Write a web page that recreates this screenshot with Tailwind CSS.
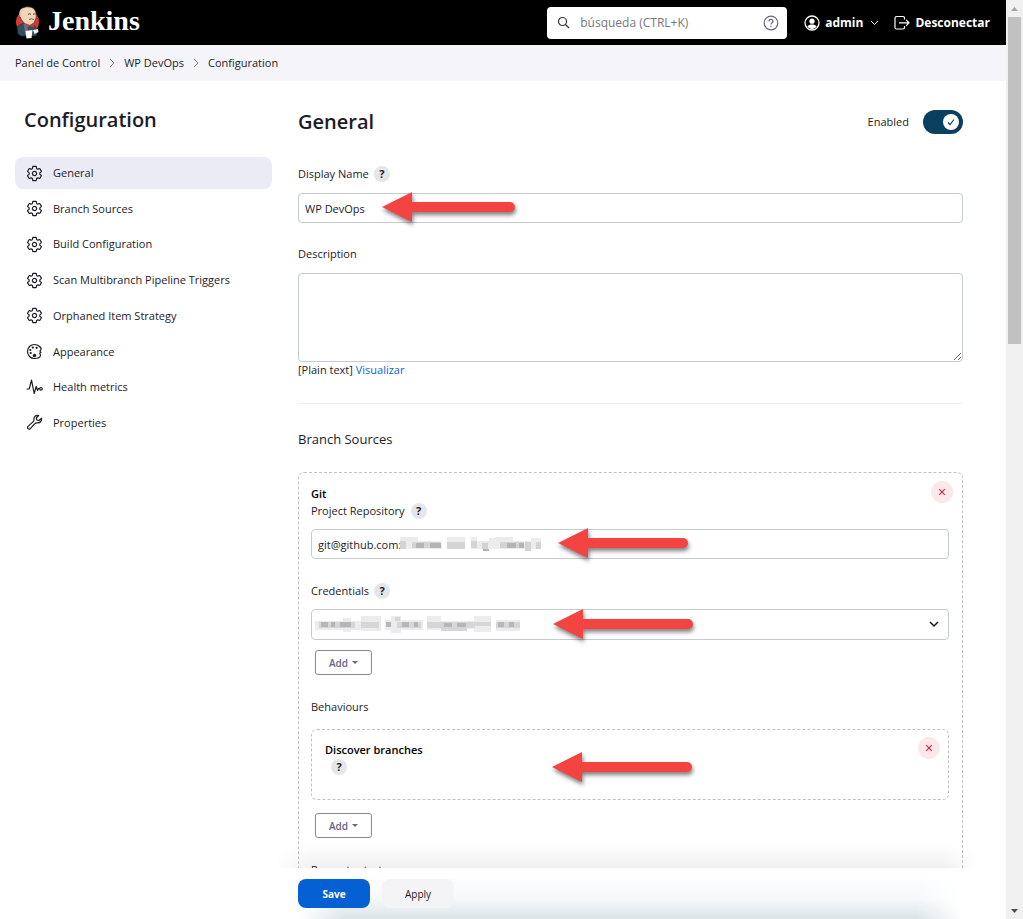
<!DOCTYPE html>
<html lang="es">
<head>
<meta charset="utf-8">
<title>WP DevOps Config [Jenkins]</title>
<script src="https://cdn.jsdelivr.net/npm/@tailwindcss/browser@4"></script>
</head>
<body class="flex h-screen overflow-hidden bg-white font-['Open_Sans','Noto_Sans',sans-serif] text-[11px] leading-4 text-[#1c1c28]">
<svg class="hidden" aria-hidden="true">
  <symbol id="gear" viewBox="0 0 512 512"><path d="M262.29 192.31a64 64 0 1 0 57.4 57.4 64.13 64.13 0 0 0-57.4-57.4zM416.39 256a154.34 154.34 0 0 1-1.53 20.79l45.21 35.46a10.81 10.81 0 0 1 2.45 13.75l-42.77 74a10.81 10.81 0 0 1-13.14 4.59l-44.9-18.08a16.11 16.11 0 0 0-15.17 1.75A164.48 164.48 0 0 1 325 400.8a15.94 15.94 0 0 0-8.82 12.14l-6.73 47.89a11.08 11.08 0 0 1-10.68 9.17h-85.54a11.11 11.11 0 0 1-10.69-8.87l-6.72-47.82a16.07 16.07 0 0 0-9-12.22 155.3 155.3 0 0 1-21.46-12.57 16 16 0 0 0-15.11-1.71l-44.89 18.07a10.81 10.81 0 0 1-13.14-4.58l-42.77-74a10.8 10.8 0 0 1 2.45-13.75l38.21-30a16.05 16.05 0 0 0 6-14.08c-.36-4.17-.58-8.33-.58-12.5s.21-8.27.58-12.35a16 16 0 0 0-6.07-13.94l-38.19-30A10.81 10.81 0 0 1 49.48 186l42.77-74a10.81 10.81 0 0 1 13.14-4.59l44.9 18.08a16.11 16.11 0 0 0 15.17-1.75A164.48 164.48 0 0 1 187 111.2a15.94 15.94 0 0 0 8.82-12.14l6.73-47.89A11.08 11.08 0 0 1 213.23 42h85.54a11.11 11.11 0 0 1 10.69 8.87l6.72 47.82a16.07 16.07 0 0 0 9 12.22 155.3 155.3 0 0 1 21.46 12.57 16 16 0 0 0 15.11 1.71l44.89-18.07a10.81 10.81 0 0 1 13.14 4.58l42.77 74a10.8 10.8 0 0 1-2.45 13.75l-38.21 30a16.05 16.05 0 0 0-6.05 14.08c.33 4.14.55 8.3.55 12.47z" fill="none" stroke="currentColor" stroke-linejoin="round" stroke-width="36"/></symbol>
  <symbol id="cross" viewBox="0 0 10 10"><path d="M1.5 1.5l7 7M8.5 1.5l-7 7" stroke="currentColor" stroke-width="1.3" fill="none"/></symbol>
</svg>

<div class="flex min-w-0 flex-1 flex-col">
  <header class="flex h-[45px] shrink-0 items-center bg-black pr-4 pl-[15px] text-white">
    <a href="#" class="flex items-center gap-2">
      <svg class="h-[33px] w-[25px]" viewBox="0 0 25 33" aria-hidden="true">
        <circle cx="12.5" cy="16" r="11.5" fill="#d33833"/>
        <path d="M5 10C4 3 10 0 14 1c6 0 8 6 7 11l-2 5-5 3-5-3-3-4z" fill="#f0d6b7" stroke="#4a352c" stroke-width=".7"/>
        <path d="M5 11C3 5 6 2 9 2L7 6l0 5z" fill="#d8d2c8"/>
        <path d="M13 8.300q1.500-1 3 0M18 8.300q1.500-1 2.500 0" fill="none" stroke="#37302c" stroke-width=".9"/>
        <path d="M14 13.500q2-1.500 5 0" fill="none" stroke="#6d4c36" stroke-width=".9"/>
        <path d="M2 21l6-4 5 4 5-3 5 7-2 5H6l-3-2z" fill="#335061" stroke="#132634" stroke-width=".6"/>
        <path d="M8.500 17.500l3 1 2 7-3 3z" fill="#5d7688"/>
        <path d="M11 17.500l4 1.500 4-2v4.500l-4-1.500-3 2z" fill="#d33833"/>
        <path d="M10.500 25l7-1-1 8-5 .5z" fill="#fff"/><path d="M18 24l5-1 .5 3-4 2z" fill="#f4eee3"/>
      </svg>
      <span class="-mt-1 font-['Liberation_Serif',serif] text-[28px] leading-8 font-bold">Jenkins</span>
    </a>
    <form class="ml-auto flex h-8 w-60 items-center rounded bg-white px-[10px] text-[#5c5c66]">
      <svg class="size-[13px] shrink-0" viewBox="0 0 13 13" fill="none" stroke="#33333c" stroke-width="1.200" aria-hidden="true"><circle cx="5.500" cy="5.500" r="4"/><path d="M8.500 8.500l3.500 3.500"/></svg>
      <input type="search" aria-label="búsqueda" placeholder="búsqueda (CTRL+K)" class="ml-[10px] min-w-0 flex-1 text-xs outline-none placeholder:text-[#77777f]">
      <button type="button" aria-label="Ayuda" class="-mr-[2px] shrink-0"><svg class="size-4" viewBox="0 0 16 16" fill="none" stroke="#666680" stroke-width="1.200"><circle cx="8" cy="8" r="6.800"/><path d="M6 6.400c0-2.600 4-2.600 4 0 0 1.400-2 1.500-2 3M8 10.800v1.200"/></svg></button>
    </form>
    <a href="#" class="ml-[17px] flex items-center gap-[5px] text-xs font-bold">
      <svg class="size-4" viewBox="0 0 16 16" aria-hidden="true"><circle cx="8" cy="8" r="7" fill="none" stroke="#fff" stroke-width="1.300"/><circle cx="8" cy="6.200" r="2.600" fill="#fff"/><path d="M3.500 11.500c1.500-2.600 7.500-2.600 9 0-2 3.300-7 3.300-9 0z" fill="#fff"/></svg>
      admin
    </a>
    <button type="button" aria-label="Menú de usuario" class="ml-[7px]"><svg class="h-2 w-[9px]" viewBox="0 0 9 8" fill="none" stroke="#fff" stroke-width="1"><path d="M1 2l3.500 3.500L8 2"/></svg></button>
    <a href="#" class="ml-[15px] flex items-center gap-[5px] text-xs font-bold">
      <svg class="size-4" viewBox="0 0 16 16" fill="none" stroke="#fff" stroke-width="1.200" aria-hidden="true"><path d="M10.500 4.500V3q0-1.500-1.500-1.500H2.500Q1 1.500 1 3v9.500Q1 14 2.500 14H9q1.500 0 1.500-1.500V11M5 7.800h10M12 4.800l3 3-3 3"/></svg>
      Desconectar
    </a>
  </header>

  <nav aria-label="Ruta" class="flex h-9 shrink-0 items-center gap-[9px] bg-[#f5f5f9] px-[15px]">
    <a href="#">Panel de Control</a>
    <svg class="h-[10px] w-[6px]" viewBox="0 0 6 10" fill="none" stroke="#85858f" aria-hidden="true"><path d="M1 1l4 4-4 4"/></svg>
    <a href="#">WP DevOps</a>
    <svg class="h-[10px] w-[6px]" viewBox="0 0 6 10" fill="none" stroke="#85858f" aria-hidden="true"><path d="M1 1l4 4-4 4"/></svg>
    <a href="#">Configuration</a>
  </nav>

  <div class="flex min-h-0 flex-1 gap-[26px] overflow-hidden pr-[43px] pl-[15px]">
    <aside class="w-[257px] shrink-0 pt-[25px]">
      <h1 class="px-[9px] text-[20px] leading-7 font-semibold">Configuration</h1>
      <nav aria-label="Secciones" class="mt-[23px] grid h-[282px] content-between">
        <a href="#general" class="flex h-8 items-center gap-[10px] rounded-lg bg-[#ebebf5] px-[11px]"><svg class="size-[17px]"><use href="#gear"/></svg>General</a>
        <a href="#sources" class="flex h-8 items-center gap-[10px] rounded-lg px-[11px]"><svg class="size-[17px]"><use href="#gear"/></svg>Branch Sources</a>
        <a href="#build" class="flex h-8 items-center gap-[10px] rounded-lg px-[11px]"><svg class="size-[17px]"><use href="#gear"/></svg>Build Configuration</a>
        <a href="#triggers" class="flex h-8 items-center gap-[10px] rounded-lg px-[11px]"><svg class="size-[17px]"><use href="#gear"/></svg>Scan Multibranch Pipeline Triggers</a>
        <a href="#orphaned" class="flex h-8 items-center gap-[10px] rounded-lg px-[11px]"><svg class="size-[17px]"><use href="#gear"/></svg>Orphaned Item Strategy</a>
        <a href="#appearance" class="flex h-8 items-center gap-[10px] rounded-lg px-[11px]"><svg class="size-[17px]" viewBox="0 0 17 17" fill="none" stroke="currentColor" stroke-width="1.200"><path d="M14.800 9.300c-1.300-.8-.7-1.900.1-2.600C16 5 12.500 1.500 8.500 1.500c-4 0-7 3-7 7s3 7 6.800 7c3.200 0 6-1.300 6.200-3 .1-1.200-1.200-1.500-.6-2.500z"/><g fill="currentColor" stroke="none"><circle cx="8.500" cy="12.500" r="1.700"/><circle cx="4.700" cy="10" r="1.100"/><circle cx="4.300" cy="7" r="1.100"/><circle cx="6.800" cy="4.600" r="1.100"/><circle cx="10.600" cy="4.800" r="1.100"/></g></svg>Appearance</a>
        <a href="#health" class="flex h-8 items-center gap-[10px] rounded-lg px-[11px]"><svg class="size-[17px]" viewBox="0 0 17 17" fill="none" stroke="currentColor" stroke-width="1.200" stroke-linejoin="round" stroke-linecap="round"><path d="M1 10h2.200L5.500 1.200 8.200 14.500l2-7 1.400 4L12.500 9.500h1"/><circle cx="15" cy="9.800" r="1.300"/></svg>Health metrics</a>
        <a href="#properties" class="flex h-8 items-center gap-[10px] rounded-lg px-[11px]"><svg class="size-[17px]" viewBox="0 0 17 17" fill="none" stroke="currentColor" stroke-width="1.200" stroke-linejoin="round"><path d="M15.500 4.200l-2.600 2.300-2.100-.5-.5-2 2.400-2.500c-2.300-.6-5.200.7-4.800 4.200.1 1-.2 1.600-.9 2.200l-5 4.500c-1.500 1.500.8 3.800 2.300 2.300l4.500-5c.6-.7 1.300-1 2.200-.9 3.500.4 5.200-2.300 4.500-4.600z"/><path d="M3.500 13.500h.2"/></svg>Properties</a>
      </nav>
    </aside>

    <main class="min-w-0 flex-1 pt-[27px]">
      <section id="general">
        <div class="flex h-7 items-center">
          <h2 class="text-[20px] leading-7 font-semibold">General</h2>
          <label for="enabled" class="ml-auto flex items-center gap-[14px]">Enabled
            <span class="relative flex h-6 w-10">
              <input id="enabled" type="checkbox" checked class="h-6 w-10 appearance-none rounded-full bg-[#0b3f60]">
              <span class="pointer-events-none absolute top-1 right-1 flex size-4 items-center justify-center rounded-full bg-white"><svg class="size-2" viewBox="0 0 8 8" fill="none" stroke="#0b3f60" stroke-width="1.200"><path d="M1 4.500l2 2L7 1.500"/></svg></span>
            </span>
          </label>
        </div>

        <div class="mt-[30px] flex h-4 items-center gap-[5px]"><label for="display">Display Name</label><button type="button" aria-label="Ayuda: Display Name" class="size-4 rounded-full bg-[#e6e6e8] font-bold">?</button></div>
        <div class="relative mt-[11px]">
          <input id="display" value="WP DevOps" class="block h-[30px] w-full rounded border border-[#c3ccd1] px-[6px]">
          <svg class="absolute -top-2 left-[80px] h-[48px] w-[146px] drop-shadow-[1px_3px_2px_rgba(0,0,0,0.5)]" viewBox="0 0 146 48" fill="#f44441" aria-hidden="true"><path d="M4 22L34 7V17H132a5 5 0 0 1 0 10H34V37z"/></svg>
        </div>

        <label for="description" class="mt-[23px] block">Description</label>
        <textarea id="description" class="mt-[11px] block h-[89px] w-full resize-y rounded border border-[#c3ccd1]"></textarea>
        <p>[Plain text] <a href="#" class="text-[#0b66cf]">Visualizar</a></p>
      </section>

      <section id="sources" class="mt-[25px] border-t border-[#f0f0f3] pt-[25px]">
        <h2 class="text-[13px] leading-5 font-medium">Branch Sources</h2>
        <div class="mt-[23px] h-[500px] rounded-md border border-dashed border-[#bfc3c7] pt-[13px] pr-[13px] pl-3">
          <div class="relative">
            <h3 class="font-semibold text-black">Git</h3>
            <button type="button" aria-label="Eliminar Git" class="absolute -top-[5px] -right-[4px] flex size-[22px] items-center justify-center rounded-full bg-[#fce8ea] text-[#cc2347]"><svg class="size-2"><use href="#cross"/></svg></button>
          </div>
          <div class="mt-px flex h-4 items-center gap-[6px]"><label for="repo">Project Repository</label><button type="button" aria-label="Ayuda: Project Repository" class="size-4 rounded-full bg-[#e6e6e8] font-bold">?</button></div>
          <div class="relative mt-[10px]">
            <input id="repo" value="git@github.com:" class="block h-[30px] w-full rounded border border-[#c3ccd1] px-[6px]">
            <svg class="absolute top-[8px] left-[89px] h-[14px] w-[142px]" viewBox="0 0 142 14" shape-rendering="crispEdges" aria-hidden="true">
              <path fill="#ececee" d="M0 0h18v12H0zM18 4h24v8H18zM47 0h18v12H47zM71 0h6v12H71zM77 4h54v8H77zM89 1h6v11h-6zM95 0h18v12H95zM131 1h10v11h-10z"/>
              <path fill="#d4d4d7" d="M0 4h6v8H0zM12 5h28v6H12zM47 5h18v7H47zM71 4h6v7h-6zM82 6h6v6h-6zM100 5h24v6h-24zM125 5h6v9h-6zM136 5h5v7h-5z"/>
              <path fill="#b4b4b8" d="M16 6h8v5h-8zM30 6h11v5H30zM83 12h6v2h-6zM107 6h9v5h-9zM119 6h5v5h-5z"/>
            </svg>
            <svg class="absolute -top-2 left-[243px] h-[48px] w-[146px] drop-shadow-[1px_3px_2px_rgba(0,0,0,0.5)]" viewBox="0 0 146 48" fill="#f44441" aria-hidden="true"><path d="M4 22L34 7V17H129a5 5 0 0 1 0 10H34V37z"/></svg>
          </div>
          <div class="mt-[24px] flex h-4 items-center gap-[5px]"><label for="credentials">Credentials</label><button type="button" aria-label="Ayuda: Credentials" class="size-4 rounded-full bg-[#e6e6e8] font-bold">?</button></div>
          <div class="relative mt-[10px]">
            <select id="credentials" class="block h-[31px] w-full appearance-none rounded border border-[#c3ccd1] px-[6px]"><option></option></select>
            <svg class="pointer-events-none absolute top-[12px] right-[10px] h-[7px] w-[10px]" viewBox="0 0 10 7" fill="none" stroke="#14141f" stroke-width="1.500" aria-hidden="true"><path d="M1 1l4 4 4-4"/></svg>
            <svg class="pointer-events-none absolute top-[7px] left-[4px] h-[17px] w-[206px]" viewBox="0 0 206 17" shape-rendering="crispEdges" aria-hidden="true">
              <path fill="#ececee" d="M0 5h66v9H0zM28 2h8v14h-8zM46 0h20v15H46zM70 4h38v10H70zM76 0h10v17H76zM112 0h14v14h-14zM126 5h34v8h-34zM159 0h17v16h-17zM181 4h24v11h-24z"/>
              <path fill="#d6d6d9" d="M4 6h36v6H4zM46 6h18v6H46zM80 1h5v4h-5zM82 6h24v6H82zM112 6h48v6h-48zM126 11h26v4h-26zM159 6h17v4h-17zM181 6h24v6h-24z"/>
              <path fill="#b6b6ba" d="M6 6h7v5H6zM16 6h4v5h-4zM25 6h11v5H25zM71 6h5v5h-5zM87 6h7v5h-7zM99 6h4v5h-4zM129 7h8v4h-8zM142 7h9v4h-9zM183 6h6v5h-6zM194 6h5v5h-5z"/>
            </svg>
            <svg class="pointer-events-none absolute -top-[7px] left-[238px] h-[48px] w-[156px] drop-shadow-[1px_3px_2px_rgba(0,0,0,0.5)]" viewBox="0 0 156 48" fill="#f44441" aria-hidden="true"><path d="M4 22L34 7V17H139a5 5 0 0 1 0 10H34V37z"/></svg>
          </div>
          <button type="button" class="mt-[10px] ml-1 flex h-[25px] w-[57px] items-center justify-center gap-1 rounded-[3px] border border-[#8b8b94] text-[10px] font-semibold text-[#666680]">Add<svg class="h-[3px] w-[6px]" viewBox="0 0 6 3" fill="currentColor"><path d="M0 0h6L3 3z"/></svg></button>

          <h3 class="mt-[24px]">Behaviours</h3>
          <div class="relative mt-[14px] h-[71px] rounded-md border border-dashed border-[#bfc3c7] px-[13px] pt-[12px]">
            <h4 class="font-semibold text-black">Discover branches</h4>
            <button type="button" aria-label="Ayuda: Discover branches" class="mt-px ml-[6px] block size-4 rounded-full bg-[#e6e6e8] font-bold">?</button>
            <button type="button" aria-label="Eliminar Discover branches" class="absolute top-[7px] right-[8px] flex size-[22px] items-center justify-center rounded-full bg-[#fce8ea] text-[#cc2347]"><svg class="size-2"><use href="#cross"/></svg></button>
            <svg class="pointer-events-none absolute top-[15px] left-[236px] h-[48px] w-[156px] drop-shadow-[1px_3px_2px_rgba(0,0,0,0.5)]" viewBox="0 0 156 48" fill="#f44441" aria-hidden="true"><path d="M4 22L34 7V17H139a5 5 0 0 1 0 10H34V37z"/></svg>
          </div>
          <button type="button" class="mt-[13px] ml-1 flex h-[25px] w-[57px] items-center justify-center gap-1 rounded-[3px] border border-[#8b8b94] text-[10px] font-semibold text-[#666680]">Add<svg class="h-[3px] w-[6px]" viewBox="0 0 6 3" fill="currentColor"><path d="M0 0h6L3 3z"/></svg></button>
          <h3 class="mt-[24px]">Property strategy</h3>
        </div>
      </section>
    </main>
  </div>

  <footer class="relative flex h-[51px] shrink-0 items-start gap-3 bg-white pt-[11px] pr-[43px] pl-[298px]">
    <div class="pointer-events-none absolute -top-[24px] right-[28px] left-[276px] h-6 bg-linear-to-t from-black/6 to-transparent mask-x-from-95% mask-x-to-100%" aria-hidden="true"></div>
    <div class="pointer-events-none absolute right-[43px] bottom-0 left-[298px] h-[40px] bg-linear-to-t from-[#dbe3e7] via-[#f6f8fa] to-[#fcfdfe] mask-x-from-93% mask-x-to-100%" aria-hidden="true"></div>
    <button type="submit" class="relative h-[29px] w-[72px] rounded-lg bg-[#0560d4] text-[10px] font-bold text-white">Save</button>
    <button type="button" class="relative h-[29px] w-[72px] rounded-lg bg-[#f4f4f7] text-[10px] font-medium">Apply</button>
  </footer>
</div>

<div class="flex w-[17px] shrink-0 flex-col items-center bg-[#f0f0f1]" aria-hidden="true">
  <svg class="size-[17px] shrink-0" viewBox="0 0 17 17" fill="#a3a3a3"><path d="M5 11l3.500-4 3.500 4z"/></svg>
  <div class="h-[327px] w-[13px] bg-[#c1c1c1]"></div>
  <svg class="mt-auto size-[17px] shrink-0" viewBox="0 0 17 17" fill="#505050"><path d="M5 7l3.500 4L12 7z"/></svg>
</div>
</body>
</html>
